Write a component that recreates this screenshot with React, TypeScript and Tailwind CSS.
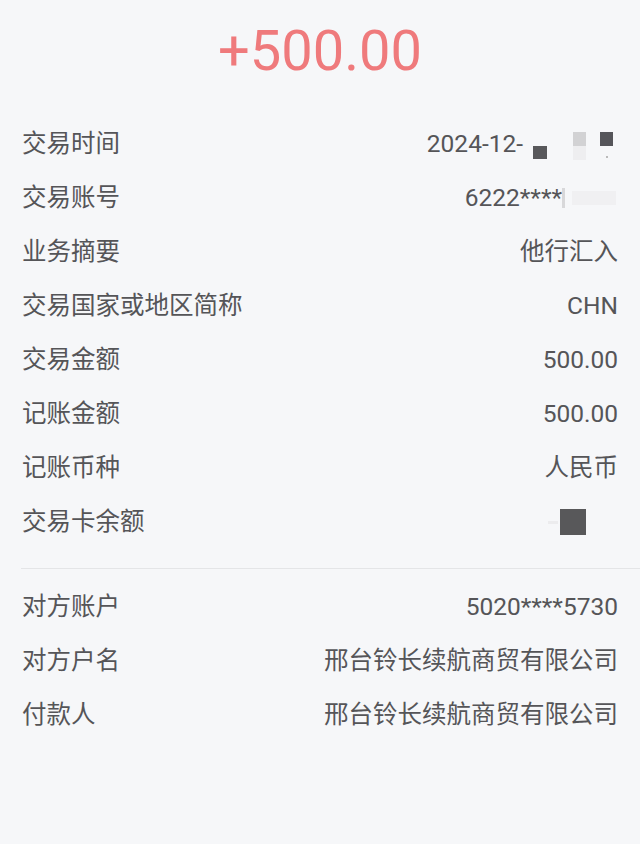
import React from "react"

const font = { fontFamily: "Roboto, 'Noto Sans CJK SC', sans-serif" }

type Row = { label: string; value: React.ReactNode }

// 打码的日期部分
function DateValue() {
  return (
    <span className="flex items-center">
      <span>2024-12-</span>
      <span className="flex items-start gap-[26px] pl-[10px] w-[95px] pt-[3px]">
        <span className="w-[14px] h-[13px] mt-[14px] bg-[#58585b]" />
        <span className="flex flex-col">
          <span className="w-[13px] h-[14px] bg-[#d2d2d4]" />
          <span className="w-[13px] h-[14px] bg-[#eeeef0]" />
        </span>
        <span className="flex flex-col items-center -ml-[12px]">
          <span className="w-[13px] h-[14px] bg-[#55555a]" />
          <span className="w-[2px] h-[2px] mt-[10px] bg-[#bbbbbb]" />
        </span>
      </span>
    </span>
  )
}

function AccountValue() {
  return (
    <span className="flex items-center">
      <span>6222****</span>
      <span className="flex items-center gap-[7px] w-[56px]">
        <span className="w-[3px] h-[20px] bg-[#d8d8da]" />
        <span className="w-[44px] h-[14px] bg-[#f0f0f2]" />
      </span>
    </span>
  )
}

function BalanceValue() {
  return (
    <span className="flex items-center gap-[2px] mr-[32px]">
      <span className="w-[10px] h-[3px] bg-[#ececee]" />
      <span className="w-[26px] h-[26px] bg-[#58585a]" />
    </span>
  )
}

const group1: Row[] = [
  { label: "交易时间", value: <DateValue /> },
  { label: "交易账号", value: <AccountValue /> },
  { label: "业务摘要", value: "他行汇入" },
  { label: "交易国家或地区简称", value: "CHN" },
  { label: "交易金额", value: "500.00" },
  { label: "记账金额", value: "500.00" },
  { label: "记账币种", value: "人民币" },
  { label: "交易卡余额", value: <BalanceValue /> },
]

const group2: Row[] = [
  { label: "对方账户", value: "5020****5730" },
  { label: "对方户名", value: "邢台铃长续航商贸有限公司" },
  { label: "付款人", value: "邢台铃长续航商贸有限公司" },
]

function InfoRow({ row }: { row: Row }) {
  return (
    <div className="flex items-center justify-between h-[54px] px-[22px]">
      <span>{row.label}</span>
      <span className="text-right">{row.value}</span>
    </div>
  )
}

export default function App() {
  return (
    <div
      className="w-[640px] h-[844px] bg-[#f6f7f9] text-[#555558] text-[24.5px] leading-[30px] overflow-hidden"
      style={font}
    >
      {/* 金额 */}
      <div className="pt-[19px] h-[117px]">
        <div className="text-center text-[56px] leading-[64px] text-[#ef7a7c]">+500.00</div>
      </div>

      {/* 交易明细 */}
      <div>
        {group1.map((row) => (
          <InfoRow key={row.label} row={row} />
        ))}
      </div>

      <div className="mt-[19px] ml-[21px] h-px bg-[#e4e5e7]" />

      <div className="mt-[11px]">
        {group2.map((row) => (
          <InfoRow key={row.label} row={row} />
        ))}
      </div>
    </div>
  )
}
